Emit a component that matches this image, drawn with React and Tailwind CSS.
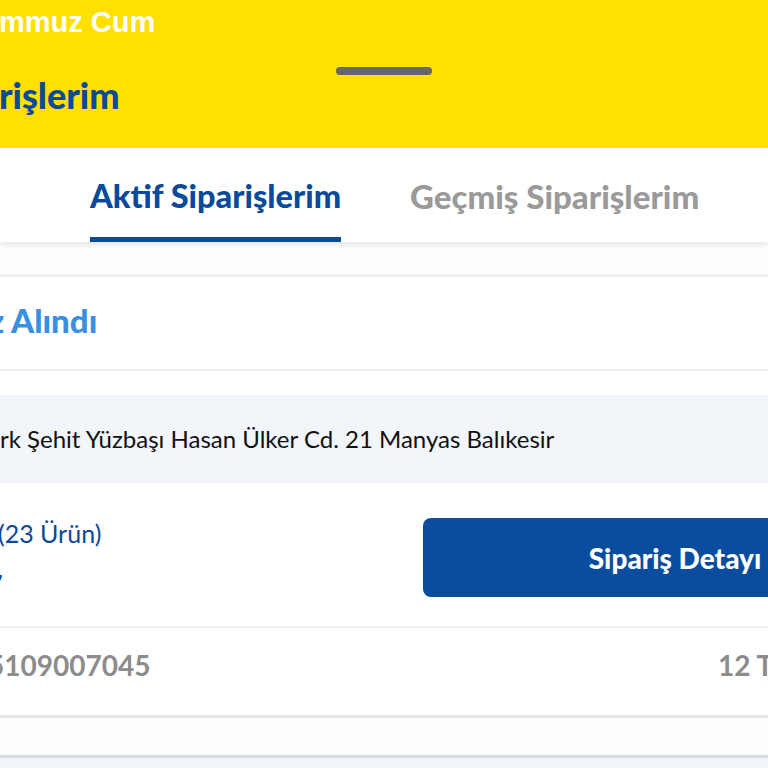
import React from 'react';

const jost = { fontFamily: 'Lato, "Noto Sans", sans-serif' };

export default function App() {
  return (
    <div className="w-[768px] h-[768px] overflow-hidden bg-white flex flex-col" style={jost}>
      {/* Yellow header */}
      <div className="h-[148px] shrink-0 bg-[#FFE000] flex flex-col">
        <div
          className="pt-[5px] ml-[-1px] text-[29px] leading-[34px] font-semibold text-white whitespace-nowrap"
          style={{ fontFamily: '"Liberation Sans", Arial, sans-serif' }}
        >
          mmuz Cum
        </div>
        <div className="mt-[28px] mx-auto w-[96px] h-[8px] rounded-full bg-[#66666a]" />
        <div className="mt-[-1px] ml-[-1px] text-[36px] leading-[42px] font-black text-[#0B4A99] whitespace-nowrap">
          rişlerim
        </div>
      </div>

      {/* Tabs */}
      <div className="h-[94px] shrink-0 bg-white flex shadow-[0_3px_5px_rgba(0,0,0,0.09)] relative z-10">
        <div className="ml-[90px] flex flex-col w-[251px] shrink-0">
          <div className="mt-[29px] text-[32.5px] leading-[38px] font-black text-[#0B4A99] whitespace-nowrap text-center">
            Aktif Siparişlerim
          </div>
          <div className="mt-auto h-[5px] bg-[#0D4C94]" />
        </div>
        <div className="ml-[69px] mt-[29px] text-[33px] leading-[38px] font-black text-[#9a9a9a] whitespace-nowrap">
          Geçmiş Siparişlerim
        </div>
      </div>

      {/* gap */}
      <div className="h-[35px] shrink-0 bg-[#fdfdfd] border-b-[3px] border-[#efefef]" />

      {/* Card header */}
      <div className="h-[94px] shrink-0 flex items-center pb-[6px] border-b-2 border-[#efefef]">
        <div className="ml-[-11px] text-[33px] leading-[40px] font-black text-[#3B8FE0] whitespace-nowrap">
          z Alındı
        </div>
      </div>

      <div className="h-[24px] shrink-0 bg-white" />

      {/* Address */}
      <div className="h-[88px] shrink-0 bg-[#F2F5FA] flex items-center">
        <div className="text-[24px] leading-[30px] text-[#111] whitespace-nowrap">
          rk Şehit Yüzbaşı Hasan Ülker Cd. 21 Manyas Balıkesir
        </div>
      </div>

      {/* Products + button */}
      <div className="h-[145px] shrink-0 flex border-b-2 border-[#efefef]">
        <div className="flex flex-col w-[423px] shrink-0">
          <div className="mt-[34px] ml-[-2px] text-[25px] leading-[32px] text-[#0B4A99] whitespace-nowrap">
            (23 Ürün)
          </div>
          <div className="mt-[18px] ml-[-12px] text-[25px] leading-[32px] font-bold text-[#0B4A99]">7</div>
        </div>
        <div className="mt-[35px] h-[79px] w-[504px] shrink-0 rounded-[8px] bg-[#0A4D9E] flex items-center justify-center">
          <span className="text-[28px] font-black text-white whitespace-nowrap">Sipariş Detayı</span>
        </div>
      </div>

      {/* Order number row */}
      <div className="h-[90px] shrink-0 flex items-center pb-[14px] border-b-[3px] border-[#e8e8e8]">
        <div className="w-[730px] ml-[-12px] shrink-0 text-[28px] leading-[34px] font-bold text-[#8c8c8c] whitespace-nowrap">
          5109007045
        </div>
        <div className="text-[28px] leading-[34px] font-bold text-[#8c8c8c] whitespace-nowrap">
          12 Temmuz
        </div>
      </div>

      <div className="h-[37px] shrink-0 bg-[#fdfdfd]" />
      <div className="flex-1 bg-[#F2F5FA] border-t-[3px] border-[#d8dee6]" />
    </div>
  );
}
